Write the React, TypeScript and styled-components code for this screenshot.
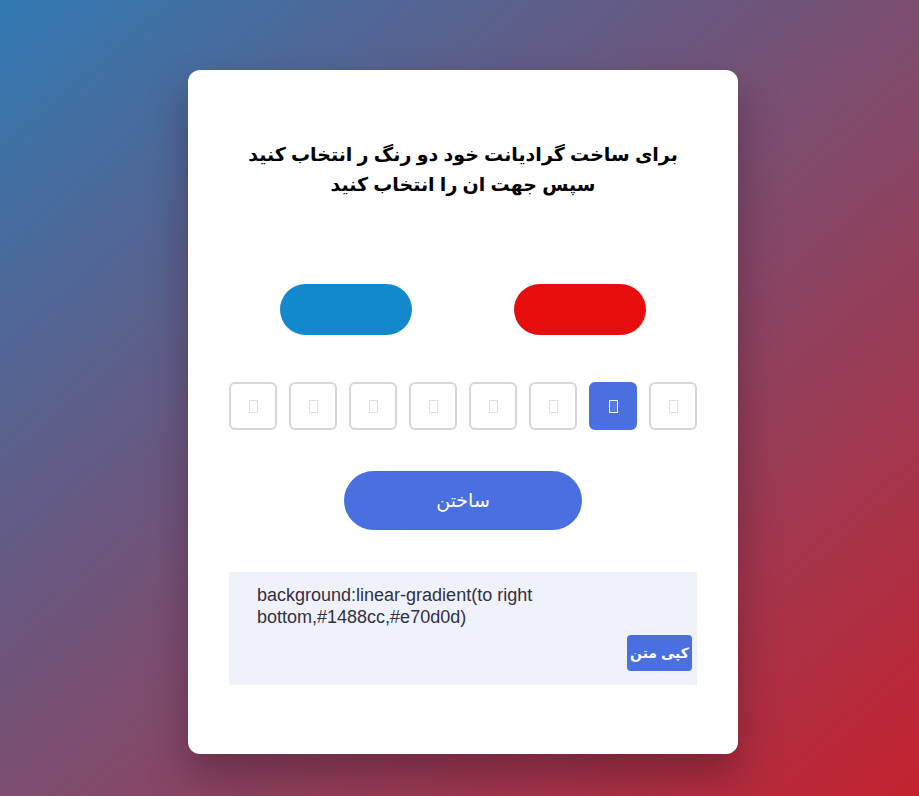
import React, { useState } from 'react'
import styled, { createGlobalStyle } from 'styled-components'

const GlobalStyle = createGlobalStyle`
  html, body {
    margin: 0;
    padding: 0;
  }
  body {
    min-height: 100vh;
    font-family: "Liberation Sans", "DejaVu Sans", Arial, sans-serif;
    background: linear-gradient(to right bottom, #3179b2, #c5222f);
  }
`

const Page = styled.div`
  min-height: 100vh;
  display: flex;
  justify-content: center;
  align-items: flex-start;
  padding: 70px 0 0 7px;
  box-sizing: border-box;
`

const Card = styled.div`
  width: 550px;
  box-sizing: border-box;
  padding: 70px 41px 69px;
  background: #fff;
  border-radius: 12px;
  box-shadow: 0 22px 40px rgba(40, 10, 30, 0.35);
  display: flex;
  flex-direction: column;
`

const Title = styled.h1`
  margin: 0;
  direction: rtl;
  text-align: center;
  font-size: 19px;
  line-height: 30px;
  font-weight: bold;
  color: #000;
`

const Swatches = styled.div`
  margin-top: 84px;
  display: flex;
  justify-content: center;
  gap: 102px;
`

const Swatch = styled.div<{ $color: string }>`
  width: 132px;
  height: 51px;
  border-radius: 26px;
  background: ${(p) => p.$color};
`

const Directions = styled.div`
  margin-top: 47px;
  display: flex;
  justify-content: space-between;
`

const DirButton = styled.button<{ $active?: boolean }>`
  width: 48px;
  height: 48px;
  padding: 0;
  box-sizing: border-box;
  border-radius: 6px;
  border: 2px solid ${(p) => (p.$active ? '#4a6fe0' : '#d6d6dc')};
  background: ${(p) => (p.$active ? '#4a6fe0' : '#fff')};
  display: flex;
  align-items: center;
  justify-content: center;
  cursor: pointer;
`

const Tofu = styled.span<{ $active?: boolean }>`
  display: block;
  width: 7px;
  height: 11px;
  border: 1px solid ${(p) => (p.$active ? '#ffffff' : '#ead9de')};
  background: ${(p) => (p.$active ? '#5a78e8' : 'transparent')};
`

const BuildButton = styled.button`
  margin: 41px auto 0;
  width: 238px;
  height: 59px;
  border: none;
  border-radius: 30px;
  background: #4a6fe0;
  color: #fff;
  font-family: inherit;
  font-size: 19px;
  cursor: pointer;
`

const CodeBox = styled.div`
  margin-top: 42px;
  background: #eff2fb;
  padding: 12px 5px 14px 28px;
  display: flex;
  flex-direction: column;
`

const CodeText = styled.p`
  margin: 0;
  padding-right: 40px;
  font-size: 18px;
  line-height: 22px;
  color: #33303f;
`

const CopyButton = styled.button`
  align-self: flex-end;
  margin-top: 7px;
  width: 65px;
  height: 36px;
  padding: 0;
  border: none;
  border-radius: 4px;
  background: #4a6fe0;
  color: #fff;
  font-family: inherit;
  font-size: 14px;
  font-weight: bold;
  white-space: nowrap;
  direction: rtl;
  cursor: pointer;
`

const colors = ['#1488cc', '#e70d0d']

function App() {
  const [active, setActive] = useState(6)
  return (
    <>
      <GlobalStyle />
      <Page>
        <Card>
          <Title>
            برای ساخت گرادیانت خود دو رنگ ر انتخاب کنید
            <br />
            سپس جهت ان را انتخاب کنید
          </Title>
          <Swatches>
            {colors.map((c) => (
              <Swatch key={c} $color={c} />
            ))}
          </Swatches>
          <Directions>
            {Array.from({ length: 8 }).map((_, i) => (
              <DirButton key={i} $active={i === active} onClick={() => setActive(i)}>
                <Tofu $active={i === active} />
              </DirButton>
            ))}
          </Directions>
          <BuildButton>ساختن</BuildButton>
          <CodeBox>
            <CodeText>
              background:linear-gradient(to right bottom,{colors[0]},{colors[1]})
            </CodeText>
            <CopyButton>کپی متن</CopyButton>
          </CodeBox>
        </Card>
      </Page>
    </>
  )
}

export default App
